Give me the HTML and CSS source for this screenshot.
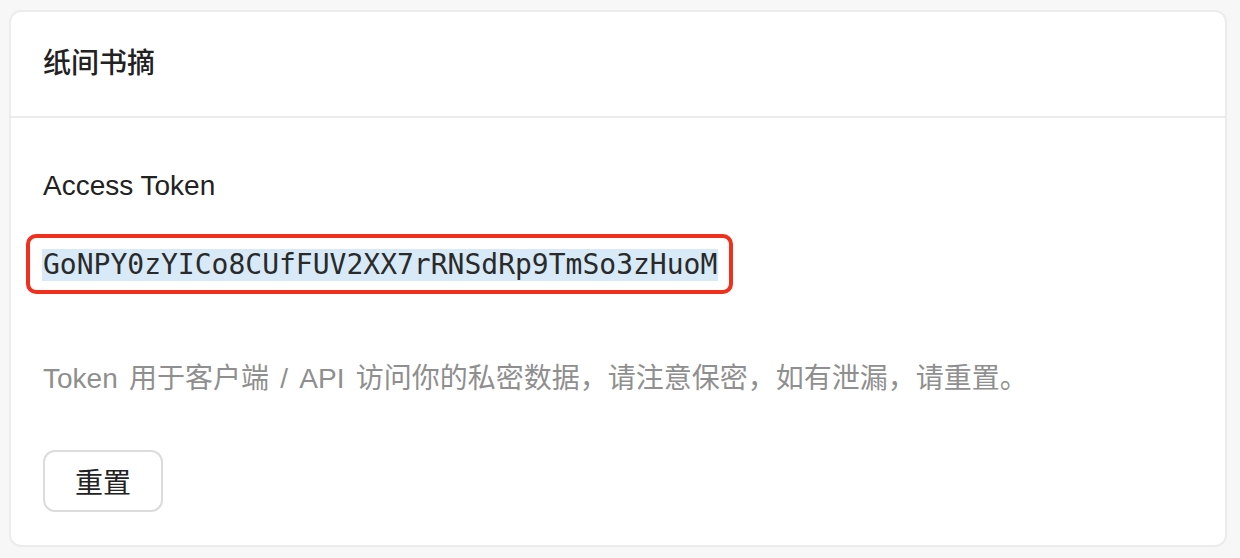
FILE: index.html
```html
<!DOCTYPE html>
<html lang="zh-CN">
<head>
  <meta charset="UTF-8">
  <meta name="viewport" content="width=device-width, initial-scale=1.0">
  <title>纸间书摘</title>
  <link rel="stylesheet" href="styles.css">
</head>
<body>
  <div class="card">
    <div class="card-header">
      <h2 class="card-title">纸间书摘</h2>
    </div>
    <div class="card-body">
      <div class="label">Access Token</div>
      <div class="token-row">
        <span class="token-mark"><span class="token">GoNPY0zYICo8CUfFUV2XX7rRNSdRp9TmSo3zHuoM</span></span>
      </div>
      <p class="hint">Token 用于客户端 / API 访问你的私密数据，请注意保密，如有泄漏，请重置。</p>
      <button class="btn" type="button">重置</button>
    </div>
  </div>
</body>
</html>
```

FILE: styles.css
```css
body {
  margin: 0;
  padding: 10px 13px 0 9px;
  background-color: #f7f7f7;
  font-family: "Liberation Sans", "Noto Sans CJK SC", sans-serif;
  color: #222;
}
.card {
  height: 537px;
  box-sizing: border-box;
  background: #fff;
  border: 2px solid #ececec;
  border-radius: 12px;
}
.card-header {
  padding: 32px 32px;
  border-bottom: 2px solid #ececec;
}
.card-title {
  margin: 0;
  font-size: 28px;
  line-height: 40px;
  font-weight: 500;
  color: #222;
}
.card-body {
  padding: 48px 32px 0;
}
.label {
  font-size: 28px;
  line-height: 40px;
  color: #222;
}
.token-row {
  margin-top: 28px;
}
.token-mark {
  display: inline-block;
  margin-left: -17px;
  padding: 11px 11px 9px 12px;
  border: 4px solid #f0301c;
  border-radius: 10px;
}
.token {
  display: block;
  background: #d8eaf7;
  font-family: "DejaVu Sans Mono", monospace;
  font-size: 28px;
  line-height: 32px;
  color: #2a2a2a;
  padding: 0 1px;
}
.hint {
  margin: 65px 0 0;
  font-size: 28px;
  line-height: 40px;
  color: #8f8f8f;
  word-spacing: 3.5px;
}
.btn {
  margin-top: 51px;
  width: 120px;
  height: 62px;
  background: #fff;
  border: 2px solid #dcdcdc;
  border-radius: 12px;
  font-family: "Liberation Sans", "Noto Sans CJK SC", sans-serif;
  font-size: 28px;
  color: #222;
  cursor: pointer;
}
```
